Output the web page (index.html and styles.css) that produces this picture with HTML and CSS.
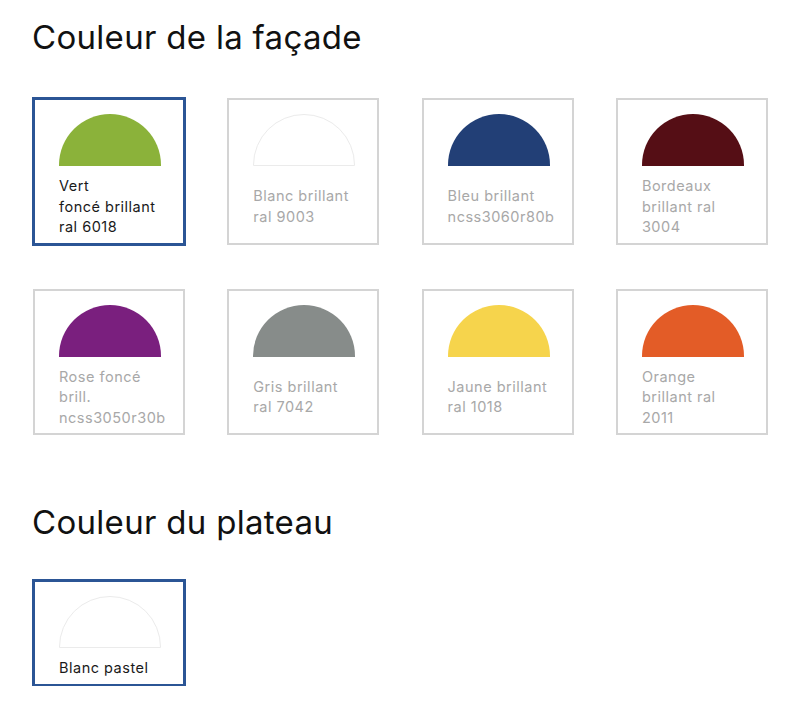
FILE: index.html
```html
<!DOCTYPE html>
<html lang="fr">
<head>
  <meta charset="UTF-8">
  <meta name="viewport" content="width=device-width, initial-scale=1.0">
  <title>Couleurs</title>
  <link rel="stylesheet" href="styles.css">
</head>
<body>
  <div class="page">
    <h2 class="section-title">Couleur de la façade</h2>
    <div class="swatches">
      <div class="swatch selected">
        <div class="dome vert"></div>
        <div class="swatch-label">Vert<br>foncé brillant<br>ral 6018</div>
      </div>
      <div class="swatch">
        <div class="dome blanc"></div>
        <div class="swatch-label">Blanc brillant<br>ral 9003</div>
      </div>
      <div class="swatch">
        <div class="dome bleu"></div>
        <div class="swatch-label">Bleu brillant<br>ncss3060r80b</div>
      </div>
      <div class="swatch">
        <div class="dome bordeaux"></div>
        <div class="swatch-label">Bordeaux<br>brillant ral<br>3004</div>
      </div>
      <div class="swatch">
        <div class="dome rose"></div>
        <div class="swatch-label">Rose foncé<br>brill.<br>ncss3050r30b</div>
      </div>
      <div class="swatch">
        <div class="dome gris"></div>
        <div class="swatch-label">Gris brillant<br>ral 7042</div>
      </div>
      <div class="swatch">
        <div class="dome jaune"></div>
        <div class="swatch-label">Jaune brillant<br>ral 1018</div>
      </div>
      <div class="swatch">
        <div class="dome orange"></div>
        <div class="swatch-label">Orange<br>brillant ral<br>2011</div>
      </div>
    </div>

    <h2 class="section-title plateau-title">Couleur du plateau</h2>
    <div class="swatches plateau">
      <div class="swatch selected">
        <div class="dome blanc"></div>
        <div class="swatch-label">Blanc pastel</div>
      </div>
    </div>
  </div>
</body>
</html>
```

FILE: styles.css
```css
body {
  margin: 0;
  background-color: #fff;
  font-family: Inter, "Liberation Sans", Arial, sans-serif;
}
.page {
  padding: 18px 0 0 32px;
}
.section-title {
  margin: 0;
  font-size: 33px;
  line-height: 38px;
  letter-spacing: 0.3px;
  font-weight: normal;
  color: #111;
}
.plateau-title {
  margin-top: 68px;
}
.swatches {
  display: grid;
  grid-template-columns: repeat(4, 152px);
  column-gap: 42.3px;
  row-gap: 44px;
  margin-top: 42px;
  margin-left: 1px;
}
.swatches.plateau {
  margin-top: 39px;
}
.swatch {
  display: flex;
  flex-direction: column;
  box-sizing: border-box;
  border: 2px solid #d4d4d4;
  padding: 14px 24px 0;
  background-color: #fff;
}
.swatch.selected {
  border-color: #2b5595;
  box-shadow: 0 0 0 1px #2b5595;
}
.dome {
  width: 102px;
  height: 52px;
  border-radius: 52px 52px 0 0;
  box-sizing: border-box;
  flex-shrink: 0;
}
.vert { background-color: #8bb23a; }
.blanc { background-color: #fff; border: 1px solid #ebebeb; }
.bleu { background-color: #223f76; }
.bordeaux { background-color: #550e15; }
.rose { background-color: #7a1f7e; }
.gris { background-color: #878c8a; }
.jaune { background-color: #f6d44c; }
.orange { background-color: #e35c27; }
.swatch-label {
  flex: 1;
  display: flex;
  align-items: center;
  padding: 10px 0 5px;
  font-size: 14.5px;
  line-height: 20.5px;
  letter-spacing: 0.5px;
  white-space: nowrap;
  color: #a8a8a8;
}
.selected .swatch-label {
  color: #1a1a1a;
}
```
